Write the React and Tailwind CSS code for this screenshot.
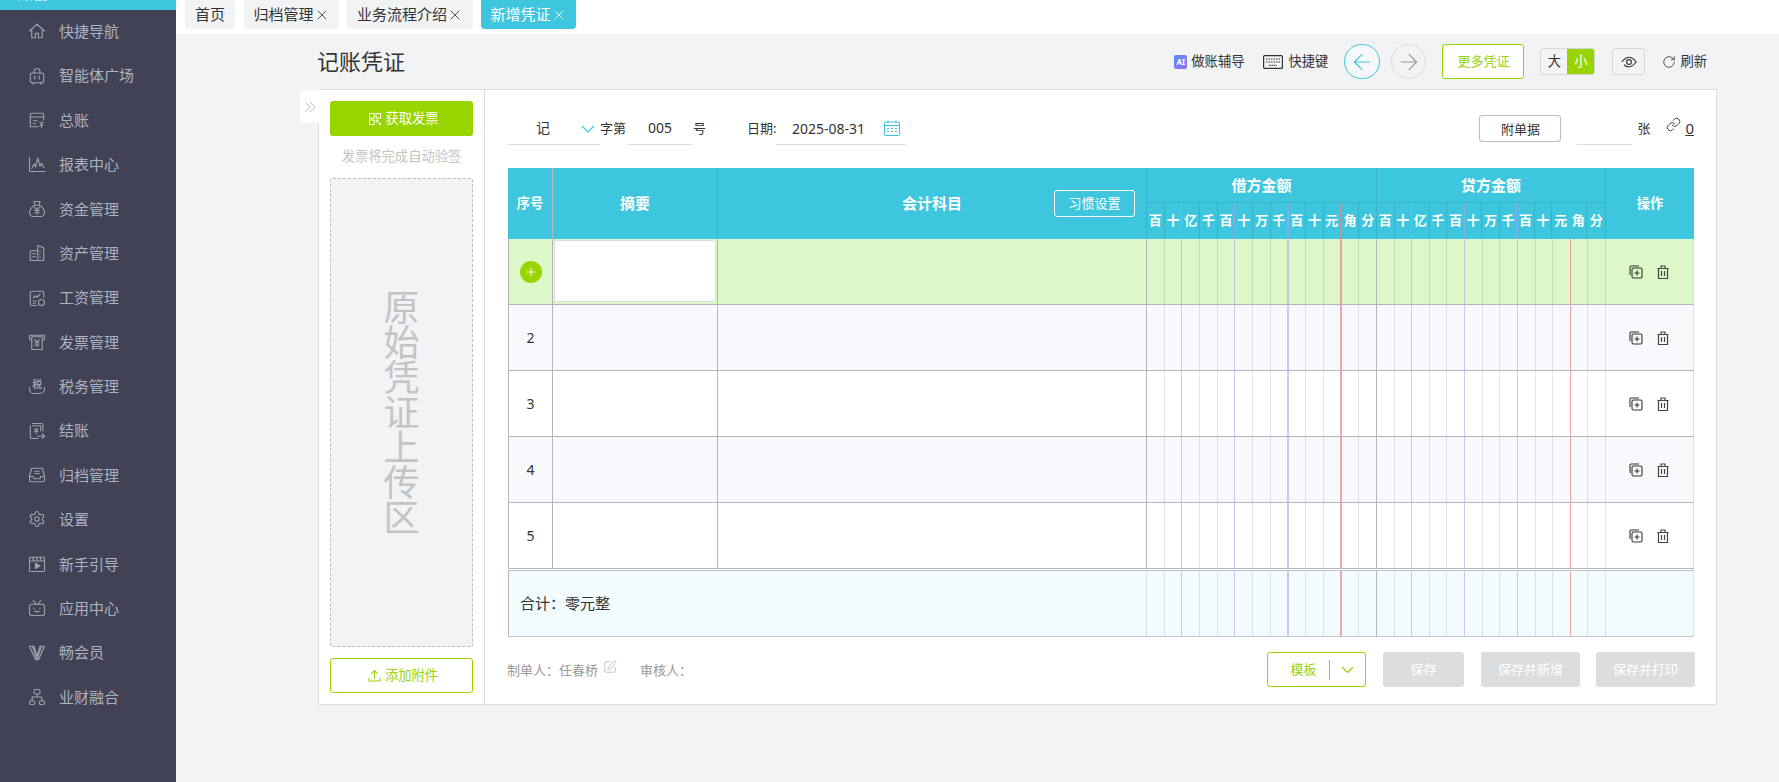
import { ArrowLeft, ArrowRight, RotateCw, X, Plus, Settings, Link, SquarePen } from 'lucide-react'

const Ico = ({ children }) => (
  <svg viewBox="0 0 24 24" className="w-[18px] h-[18px]" fill="none" stroke="#9ea1ad" strokeWidth="1.5" strokeLinecap="round" strokeLinejoin="round">
    {children}
  </svg>
)

const menu = [
  ['快捷导航', <Ico><path d="M2 12 12 3l10 9M5 10v11h5v-6h4v6h5V10" /></Ico>],
  ['智能体广场', <Ico><rect x="3" y="8" width="18" height="13" rx="3" /><path d="M8 8V6a4 4 0 0 1 8 0v2M9 12v4M15 12v4M7 21v2M17 21v2" /></Ico>],
  ['总账', <Ico><path d="M21 12V5a2 2 0 0 0-2-2H5a2 2 0 0 0-2 2v16h11M3 8h18M7 13h5M7 17h3M16 15l2 2 2-2M18 17v5M16 19h4" /></Ico>],
  ['报表中心', <Ico><path d="M2 3v19h21M5 18l3-6 2 4 3-12 3 11 2-4 3 6" /></Ico>],
  ['资金管理', <Ico><path d="M8 2h8l-1 5H9zM9 7c-5 3-7 7-7 10a5 5 0 0 0 5 5h10a5 5 0 0 0 5-5c0-3-2-7-7-10M9 10l3 3 3-3M12 13v6M9 14h6M9 17h6" /></Ico>],
  ['资产管理', <Ico><path d="M3 22V9h10v13M13 22V2l8 3v17H3M6 13h4M6 17h4M16 9v1M16 13v1M16 17v1" /></Ico>],
  ['工资管理', <Ico><path d="M21 11V5a2 2 0 0 0-2-2H5a2 2 0 0 0-2 2v15a2 2 0 0 0 2 2h7M7 12l3-3 2 2 4-4M7 16h4M7 19h3" /><circle cx="18" cy="18" r="4" /></Ico>],
  ['发票管理', <Ico><path d="M5 9H2V3h20v6h-3M5 5h14v17H5zM9 9l3 3 3-3M12 12v6M9 13h6M9 16h6" /></Ico>],
  ['税务管理', <Ico><path d="M2 14v2a6 6 0 0 0 6 6h8a6 6 0 0 0 6-6v-2" /><text x="12" y="14" textAnchor="middle" fontSize="13" fill="#9ea1ad" stroke="none" fontWeight="700">税</text></Ico>],
  ['结账', <Ico><path d="M20 12V4a2 2 0 0 0-2-2H6M3 5v15a2 2 0 0 0 2 2h8M6 5h11v7M13 19h9M19 16l3 3-3 3M9 9l2 2 2-2M11 11v4M9 12.500h4" /></Ico>],
  ['归档管理', <Ico><path d="M5 3h14l3 10v6a2 2 0 0 1-2 2H4a2 2 0 0 1-2-2v-6zM2 14h5l1 3h8l1-3h5M9 7h6M9 10h6" /></Ico>],
  ['设置', <Settings size={18} color="#9ea1ad" strokeWidth={1.5} />],
  ['新手引导', <Ico><rect x="2" y="3" width="20" height="19" rx="1" /><path d="M2 8h20M6 3l2 5M11 3l2 5M16 3l2 5" /><path d="M10 11v7l6-3.500z" fill="#9ea1ad" /></Ico>],
  ['应用中心', <Ico><rect x="2" y="7" width="20" height="15" rx="3" /><path d="M7 2l4 5M17 2l-4 5M8 12v1M16 12v1M9 16q3 2.500 6 0" /></Ico>],
  ['畅会员', <Ico><path d="M2 3h6l4 13 4-13h6l-8 18h-4zM6 3l6 18M18 3l-6 18" /></Ico>],
  ['业财融合', <Ico><rect x="8" y="2" width="8" height="6" rx="2" /><rect x="2" y="17" width="7" height="5" rx="2" /><rect x="15" y="17" width="7" height="5" rx="2" /><path d="M12 8v4M5.500 17v-5h13v5" /></Ico>],
]

const tabs = [
  ['首页', 'w-[50px] mr-px', false],
  ['归档管理', 'w-[95px]', true],
  ['业务流程介绍', 'w-[126px]', true],
]

const digits = ['百', '十', '亿', '千', '百', '十', '万', '千', '百', '十', '元', '角', '分']

// 13 digit columns, the heavy lines only show on the debit side
const digitLine = (i, debit, header) => {
  if (i === 10) return debit ? 'border-r-2 border-[#f08080]/70' : 'border-r border-[#f08080]/70'
  if (i === 7) return debit ? 'border-r-2 border-[#b79cf0]/60' : 'border-r border-[#b79cf0]/60'
  if (i === 1 || i === 4) return 'border-r border-[#b79cf0]/60'
  if (i === 12 && debit && !header) return 'border-r border-[#b5b5bd]'
  if (i === 12 && header) return debit ? 'border-r border-[#36b5cb]' : ''
  return 'border-r border-black/10'
}

const cols = 'grid grid-cols-[45px_165px_429px_230px_229px_1fr]'

function Digits({ debit, header }) {
  return (
    <div className="grid grid-cols-[repeat(13,1fr)] h-full">
      {digits.map((d, i) => (
        <div key={i} className={`flex items-center justify-center text-[13px] font-bold text-white ${digitLine(i, debit, header)}`}>
          {header ? d : ''}
        </div>
      ))}
    </div>
  )
}

function RowIcons() {
  return (
    <div className="flex items-center justify-center gap-[14px] h-full pr-[2px]">
      <svg viewBox="0 0 14 14" className="w-[14px] h-[14px]" fill="none" stroke="#333" strokeWidth="1.100">
        <path d="M1 10V2a1 1 0 0 1 1-1h8" />
        <rect x="3" y="3" width="10" height="10" rx="1.500" />
        <path d="M8 5.500v5M5.500 8h5" />
      </svg>
      <svg viewBox="0 0 12 14" className="w-[12px] h-[14px]" fill="none" stroke="#444" strokeWidth="1.200">
        <path d="M0.500 3.500h11M4 3.500V1h4v2.500M1.500 3.500v10h9v-10M4.500 6v5M7.500 6v5" />
      </svg>
    </div>
  )
}

function Row({ n, bg }) {
  return (
    <div className={`${cols} h-[66px] border-b border-[#b5b5bd] ${bg}`}>
      <div className="flex items-center justify-center text-[14px] text-[#333] border-l border-r border-[#b5b5bd]">{n}</div>
      <div className="border-r border-[#b5b5bd]" />
      <div className="border-r border-[#b5b5bd]" />
      <Digits debit />
      <Digits />
      <div className="border-r border-[#ddd]"><RowIcons /></div>
    </div>
  )
}

export default function App() {
  return (
    <div className="flex h-screen overflow-hidden bg-[#f2f3f5] font-['Noto_Sans','Noto_Sans_CJK_SC',sans-serif]">
      <aside className="w-[176px] shrink-0 bg-[#424257]">
        <div className="h-[10px] bg-[#3ec6de] overflow-hidden pl-[18px]">
          <div className="-mt-[17px] text-[15px] leading-[20px] font-bold text-white">账套</div>
        </div>
        <nav className="-mt-px">
          {menu.map(([label, icon]) => (
            <div key={label} className="h-[44.4px] flex items-center pl-[28px] gap-[13px] text-[15px] text-[#aab2c0]">
              {icon}
              <span>{label}</span>
            </div>
          ))}
        </nav>
      </aside>

      <main className="flex-1 min-w-0">
        <div className="h-[34px] bg-white pl-[9px] flex items-start gap-2 text-[15px] text-[#333]">
          {tabs.map(([label, w, close]) => (
            <div key={label} className={`${w} h-[29px] rounded-b-[4px] bg-[#f2f3f5] flex items-center justify-center`}>
              {label}
              {close && <X size={16} strokeWidth={1.25} />}
            </div>
          ))}
          <div className="w-[95px] h-[29px] rounded-b-[4px] bg-[#3ec6de] text-white flex items-center justify-center">
            新增凭证
            <X size={16} strokeWidth={1.25} />
          </div>
        </div>

        <div className="pl-[142px] pr-[62px]">
          <div className="h-[55px] flex items-center text-[13.3px] text-[#333]">
            <h1 className="text-[22px] font-normal text-[#333] -ml-px">记账凭证</h1>
            <div className="ml-auto flex items-center pr-[10px]">
              <span className="w-[13px] h-[14px] rounded-[2px] bg-gradient-to-br from-[#4b8df8] to-[#9a6cf0] text-white text-[8px] leading-[14px] text-center font-bold mr-[4px]">AI</span>
              <span>做账辅导</span>
              <svg viewBox="0 0 20 14" className="w-[20px] h-[14px] ml-[18px] mr-[6px]" fill="none" stroke="#333" strokeWidth="1.2">
                <rect x="0.600" y="0.600" width="18.800" height="12.800" rx="1" />
                <path d="M3 4h14M3 7h14M6 10.300h8" strokeDasharray="1.500 1" />
              </svg>
              <span>快捷键</span>
              <button className="w-[36px] h-[35px] ml-[16px] rounded-full border border-[#3ec6de] bg-white/40 flex items-center justify-center">
                <ArrowLeft size={26} color="#3ec6de" strokeWidth={1} />
              </button>
              <button className="w-[35px] h-[35px] ml-[11px] rounded-full border border-[#dcdcdc] flex items-center justify-center">
                <ArrowRight size={26} color="#999" strokeWidth={1} />
              </button>
              <button className="w-[82px] h-[35px] ml-[16px] rounded-[3px] border border-[#97d400] bg-white text-[#97d400] text-[13px]">更多凭证</button>
              <div className="w-[55px] h-[27px] ml-[16px] rounded-[3px] border border-[#d5d5d5] flex overflow-hidden">
                <span className="flex-1 flex items-center justify-center">大</span>
                <span className="w-[27px] bg-[#97d400] text-white flex items-center justify-center">小</span>
              </div>
              <button className="w-[33px] h-[27px] ml-[17px] rounded-[3px] border border-[#d5d5d5] flex items-center justify-center">
                <svg viewBox="0 0 20 14" className="w-[16px] h-[12px]" fill="none" stroke="#333" strokeWidth="1.4">
                  <path d="M1 7c3-4 6-6 9-6s6 2 9 6c-3 4-6 6-9 6-3 0-5-1-6-3" />
                  <circle cx="10" cy="7" r="3" />
                </svg>
              </button>
              <RotateCw size={14} color="#444" strokeWidth={1.5} className="ml-[17px] mr-[4px]" />
              <span>刷新</span>
            </div>
          </div>

          <section className="relative h-[616px] bg-white border border-[#dddddd] flex">
            <div className="absolute -left-[19px] top-0 w-[19px] h-[33px] bg-white flex items-center justify-center">
              <svg viewBox="0 0 12 12" className="w-[12px] h-[12px]" fill="none" stroke="#c4c4c4" strokeWidth="1"><path d="M1 1l5 5-5 5M6 1l5 5-5 5" /></svg>
            </div>

            <div className="w-[166px] shrink-0 border-r border-[#dddddd] pl-[11px] pr-[11px] pt-[11px] flex flex-col">
              <button className="h-[35px] pl-[5px] rounded-[3px] bg-[#97d400] text-white text-[13.3px] flex items-center justify-center gap-[4px]">
                <svg viewBox="0 0 12 12" className="w-[12px] h-[12px]" fill="none" stroke="#fff" strokeWidth="1">
                  <rect x="0.500" y="0.500" width="4.500" height="4.500" />
                  <rect x="7" y="0.500" width="4.500" height="4.500" />
                  <rect x="0.500" y="7" width="4.500" height="4.500" />
                  <path d="M7 7h2v2H7zM10 10h1.500v1.500H10z" />
                </svg>
                获取发票
              </button>
              <p className="mt-[10px] text-[13.3px] leading-[20px] text-[#c4c4c4] text-center">发票将完成自动验签</p>
              <div className="mt-[12px] h-[469px] rounded-[3px] border border-dashed border-[#bdbdbd] bg-[#f2f3f5] flex items-center justify-center">
                <div className="w-[36px] text-[36px] leading-[35px] text-[#c4c4c4] text-center">原始凭证上传区</div>
              </div>
              <button className="mt-[11px] h-[35px] pl-[3px] rounded-[3px] border border-[#97d400] text-[#97d400] text-[13.3px] flex items-center justify-center gap-[4px]">
                <svg viewBox="0 0 14 14" className="w-[13px] h-[13px]" fill="none" stroke="#97d400" strokeWidth="1.100">
                  <path d="M7 10.500V1.500M3.500 5 7 1.500 10.500 5M1 9.500v3.500h12V9.500" />
                </svg>
                添加附件
              </button>
            </div>

            <div className="flex-1 min-w-0 pl-[23px] pr-[22px] pt-[25px]">
              <div className="h-[30px] flex items-start text-[13px] text-[#333] leading-[26px]">
                <div className="w-[92px] h-[30px] border-b border-[#dddddd] flex items-start pl-[28px] pr-[5px] justify-between">
                  <span className="text-[14px]">记</span>
                  <svg viewBox="0 0 14 8" className="w-[14px] h-[8px] mt-[10px]" fill="none" stroke="#3ec6de" strokeWidth="1.200"><path d="M1 1l6 6 6-6" /></svg>
                </div>
                <span className="w-[27px]">字第</span>
                <div className="w-[66px] h-[30px] border-b border-[#dddddd] text-center text-[14px]">005</div>
                <span className="w-[14px]">号</span>
                <span className="ml-[40px] w-[29px] whitespace-nowrap">日期:</span>
                <div className="w-[130px] h-[30px] border-b border-[#dddddd] pl-[16px] flex items-start text-[14px]">
                  <span className="leading-[27px]">2025-08-31</span>
                  <svg viewBox="0 0 16 16" className="w-[16px] h-[16px] ml-[19px] mt-[5px]" fill="none" stroke="#3ec6de" strokeWidth="1">
                    <rect x="0.500" y="2" width="15" height="13.500" rx="1" />
                    <path d="M0.500 5.500h15M4 0.500v3M12 0.500v3" />
                    <path d="M3 8.500h2M7 8.500h2M11 8.500h2M3 11.500h2M7 11.500h2M11 11.500h2" />
                  </svg>
                </div>
                <button className="ml-auto w-[82px] h-[27px] rounded-[3px] border border-[#bbbbbb] text-[13px] leading-[24px]">附单据</button>
                <div className="ml-[16px] w-[55px] h-[30px] border-b border-[#dddddd]" />
                <span className="ml-[5px]">张</span>
                <Link size={15} color="#333" strokeWidth={1.5} className="ml-[16px] mt-[2px]" />
                <span className="ml-[4px] text-[15px] underline">0</span>
              </div>

              <div className="mt-[23px]">
                <div className={`${cols} h-[71px] bg-[#3ec6de] text-white font-bold`}>
                  <div className="flex items-center justify-center text-[13.3px] border-r border-[#b5b8be]">序号</div>
                  <div className="flex items-center justify-center text-[15px] border-r border-[#36b5cb]">摘要</div>
                  <div className="relative flex items-center justify-center text-[15px] border-r border-[#36b5cb]">
                    会计科目
                    <button className="absolute right-[11px] top-[22px] w-[81px] h-[27px] rounded-[3px] border border-white text-[13px] font-normal">习惯设置</button>
                  </div>
                  <div className="flex flex-col">
                    <div className="h-[35px] flex items-center justify-center text-[15px] border-b border-r border-[#36b5cb]">借方金额</div>
                    <div className="flex-1"><Digits debit header /></div>
                  </div>
                  <div className="flex flex-col border-r border-[#36b5cb]">
                    <div className="h-[35px] flex items-center justify-center text-[15px] border-b border-[#36b5cb]">贷方金额</div>
                    <div className="flex-1"><Digits header /></div>
                  </div>
                  <div className="flex items-center justify-center text-[13.3px]">操作</div>
                </div>

                <div className={`${cols} h-[66px] border-b border-[#b5b5bd] bg-[#dcf7c8]`}>
                  <div className="flex items-center justify-center border-l border-r border-[#b5b5bd]">
                    <span className="w-[22px] h-[22px] rounded-full bg-[#97d400] flex items-center justify-center">
                      <Plus size={14} color="#fff" strokeWidth={1.5} />
                    </span>
                  </div>
                  <div className="border-r border-[#b5b5bd] p-[1px]">
                    <div className="h-[62px] rounded-[3px] bg-white border border-[#dddddd]" />
                  </div>
                  <div className="border-r border-[#b5b5bd]" />
                  <Digits debit />
                  <Digits />
                  <div className="border-r border-[#ddd]"><RowIcons /></div>
                </div>
                <Row n={2} bg="bg-[#f8f9fd]" />
                <Row n={3} bg="bg-white" />
                <Row n={4} bg="bg-[#f8f9fd]" />
                <Row n={5} bg="bg-white" />

                <div className={`${cols} h-[67px] mt-[1px] border-y border-[#c4c4cc] bg-[#f2fbfe]`}>
                  <div className="col-span-3 flex items-center pl-[11px] text-[15px] text-[#333] border-l border-r border-l-[#b5b5bd] border-r-[#dadfe3]">合计：零元整</div>
                  <Digits debit />
                  <Digits />
                  <div className="border-r border-[#ddd]" />
                </div>
              </div>

              <div className="mt-[15px] flex items-center text-[13px] text-[#999]">
                <span className="-ml-px mt-[2px]">制单人：任春桥</span>
                <SquarePen size={14} color="#999" strokeWidth={1} className="ml-[5px] -mt-[6px]" />
                <span className="ml-[23px] mt-[2px]">审核人：</span>
                <div className="ml-auto -mr-px flex items-center text-white">
                  <div className="w-[99px] h-[35px] rounded-[3px] border border-[#97d400] text-[#97d400] flex items-center">
                    <span className="w-[61px] pl-[10px] text-center">模板</span>
                    <span className="w-px h-[20px] bg-[#97d400]" />
                    <svg viewBox="0 0 13 8" className="w-[13px] h-[8px] ml-[11px]" fill="none" stroke="#97d400" strokeWidth="1.200"><path d="M1 1l5.500 5.500L12 1" /></svg>
                  </div>
                  <button className="ml-[17px] w-[81px] h-[35px] rounded-[3px] bg-[#dddddd]">保存</button>
                  <button className="ml-[17px] w-[99px] h-[35px] rounded-[3px] bg-[#dddddd]">保存并新增</button>
                  <button className="ml-[16px] w-[99px] h-[35px] rounded-[3px] bg-[#dddddd]">保存并打印</button>
                </div>
              </div>
            </div>
          </section>
        </div>
      </main>
    </div>
  )
}
